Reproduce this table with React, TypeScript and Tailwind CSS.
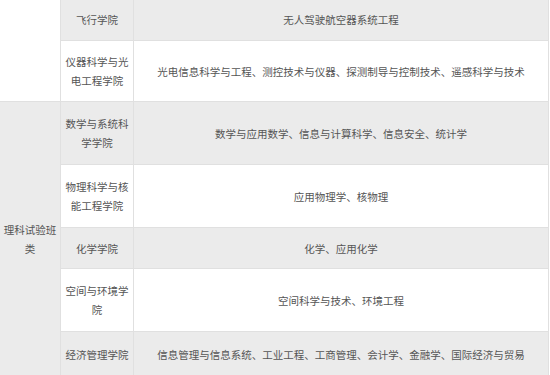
import React from "react";

type Row = { dept: string; majors: string; h: string; gray: boolean };

const sectionA: Row[] = [
  { dept: "飞行学院", majors: "无人驾驶航空器系统工程", h: "h-[43px]", gray: true },
  {
    dept: "仪器科学与光电工程学院",
    majors: "光电信息科学与工程、测控技术与仪器、探测制导与控制技术、遥感科学与技术",
    h: "h-[61px]",
    gray: false,
  },
];

const sectionB: Row[] = [
  { dept: "数学与系统科学学院", majors: "数学与应用数学、信息与计算科学、信息安全、统计学", h: "h-[63px]", gray: true },
  { dept: "物理科学与核能工程学院", majors: "应用物理学、核物理", h: "h-[63px]", gray: false },
  { dept: "化学学院", majors: "化学、应用化学", h: "h-[41px]", gray: true },
  { dept: "空间与环境学院", majors: "空间科学与技术、环境工程", h: "h-[63px]", gray: false },
  {
    dept: "经济管理学院",
    majors: "信息管理与信息系统、工业工程、工商管理、会计学、金融学、国际经济与贸易",
    h: "h-[45px]",
    gray: true,
  },
];

function Rows({ rows }: { rows: Row[] }) {
  return (
    <div className="flex flex-col">
      {rows.map((r, i) => (
        <div
          key={i}
          className={`flex ${r.h} border-b border-[#e0e0e0] ${r.gray ? "bg-[#ebebeb]" : "bg-white"}`}
        >
          <div className="w-[73px] shrink-0 border-r border-[#e0e0e0] flex items-center justify-center px-[4px] text-center">
            {r.dept}
          </div>
          <div className="w-[415px] shrink-0 border-r border-[#e0e0e0] flex items-center justify-center px-[4px] text-center">
            {r.majors}
          </div>
        </div>
      ))}
    </div>
  );
}

export default function App() {
  return (
    <div
      className="w-[550px] h-[375px] overflow-hidden bg-white text-[10.5px] leading-[19px] text-[#555555]"
      style={{ fontFamily: '"Noto Sans CJK SC", "Noto Sans", sans-serif' }}
    >
      <div className="mt-[-2px] flex flex-col w-[549px]">
        <div className="flex">
          <div className="w-[61px] shrink-0 border-r border-b border-[#e0e0e0] bg-white" />
          <Rows rows={sectionA} />
        </div>
        <div className="flex">
          <div className="w-[61px] shrink-0 border-r border-b border-[#e0e0e0] bg-[#ebebeb] flex items-center justify-center px-[2px] text-center">
            理科试验班类
          </div>
          <Rows rows={sectionB} />
        </div>
      </div>
    </div>
  );
}
